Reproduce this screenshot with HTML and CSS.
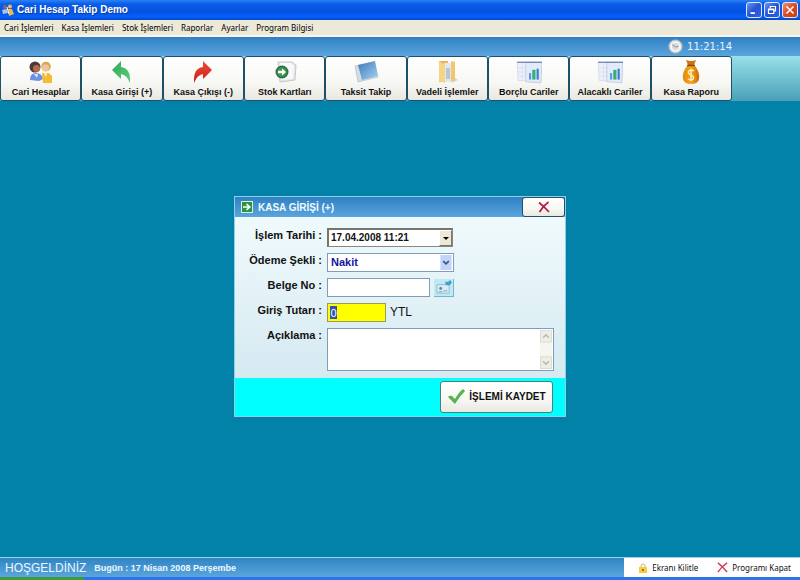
FILE: index.html
```
<!DOCTYPE html>
<html lang="tr">
<head>
<meta charset="utf-8">
<title>Cari Hesap Takip Demo</title>
<link rel="stylesheet" href="styles.css">
</head>
<body>
<svg class="defs" aria-hidden="true">
  <defs>
    <linearGradient id="green" x1="0" y1="0" x2="1" y2="1"><stop offset="0" stop-color="#2fa862"/><stop offset="1" stop-color="#5bd070"/></linearGradient>
    <linearGradient id="red" x1="0" y1="0" x2="0" y2="1"><stop offset="0" stop-color="#f04a3a"/><stop offset="1" stop-color="#c81f14"/></linearGradient>
    <linearGradient id="glass" x1="0" y1="0" x2="1" y2="1"><stop offset="0" stop-color="#3f78b4"/><stop offset="1" stop-color="#a4d4f4"/></linearGradient>
    <linearGradient id="gold" x1="0" y1="0" x2="1" y2="0"><stop offset="0" stop-color="#e08a10"/><stop offset=".5" stop-color="#f6a81c"/><stop offset="1" stop-color="#c96a08"/></linearGradient>
    <symbol id="chart" viewBox="0 0 24 22">
      <path d="M1 2h15v17H2z" fill="#edf0fa" stroke="#d3d7e4" stroke-width=".7"/>
      <path d="M2 7h9M2 11h9M2 15h9M6 3v15" stroke="#d4dcf0" stroke-width=".7"/>
      <path d="M9 2h15l-1 19-14-1z" fill="#e2ebfa" stroke="#b9c5de" stroke-width=".7"/>
      <path d="M1 2h23" stroke="#5a74b4"/>
      <path d="M12 12h2v6h-2z" fill="#5d9be0"/><path d="M15 9h3v9h-3z" fill="#35b07a"/><path d="M19 8h2v10h-2z" fill="#3f78d0"/>
    </symbol>
  </defs>
</svg>

<header class="titlebar">
  <svg class="app-icon" viewBox="0 0 12 12"><circle cx="3" cy="3" r="2" fill="#8b6a50"/><circle cx="8" cy="2.500" r="2" fill="#f2b97a"/><path d="M0 6l5-1 1 4-5 1z" fill="#a9c4f0"/><path d="M6 5h4l2 5-5 2z" fill="#f0b840"/><path d="M5 3l2 7" stroke="#fff"/></svg>
  <h1>Cari Hesap Takip Demo</h1>
  <div class="window-controls">
    <button type="button" aria-label="Simge durumuna küçült"><svg viewBox="0 0 16 16"><path d="M4 11.500h5" stroke="#fff" stroke-width="2"/></svg></button>
    <button type="button" aria-label="Önceki boyut"><svg viewBox="0 0 16 16"><path d="M6 6V4h6v5h-2M4 7h6v5H4zM4 7.500h6" fill="none" stroke="#fff" stroke-width="1.300"/></svg></button>
    <button type="button" class="exit" aria-label="Kapat"><svg viewBox="0 0 16 16"><path d="M4 4l8 8M12 4l-8 8" stroke="#fff" stroke-width="1.800"/></svg></button>
  </div>
</header>

<nav class="menu">
  <a href="#">Cari İşlemleri</a><a href="#">Kasa İşlemleri</a><a href="#">Stok İşlemleri</a><a href="#">Raporlar</a><a href="#">Ayarlar</a><a href="#">Program Bilgisi</a>
</nav>

<div class="clock-bar">
  <svg class="clock" viewBox="0 0 16 16"><circle cx="8" cy="8" r="7" fill="#e9eaec" stroke="#b7b9be" stroke-width="1.200"/><circle cx="8" cy="8" r="4.500" fill="#d9dadd" stroke="#fff"/><path d="M4.500 6L8 8.500 11 8" fill="none" stroke="#8f8f96"/></svg>
  <time>11:21:14</time>
</div>

<div class="toolbar">
  <div class="tools">
    <button type="button"><svg viewBox="0 0 26 24"><circle cx="7" cy="7" r="5.500" fill="#4a3a3c"/><circle cx="8.500" cy="8.500" r="3.500" fill="#b56c48"/><path d="M2 20q0-7 6-7t7 6l-4 2z" fill="#6d8fe4"/><path d="M6 14l3 4 1-4z" fill="#dfe8fb"/><circle cx="18" cy="6.500" r="4.800" fill="#d7a94c"/><circle cx="17.500" cy="7.800" r="3.600" fill="#f0c49a"/><path d="M14 13h7l3 3v7h-9z" fill="#f4bd30"/><path d="M16 13l2 4 1-4z" fill="#fff4d0"/></svg>Cari Hesaplar</button>
    <button type="button"><svg viewBox="0 0 26 24"><path d="M3 10L12 1v6q10 1 9 16-3-8-9-9v5z" fill="url(#green)"/></svg>Kasa Girişi (+)</button>
    <button type="button"><svg viewBox="0 0 26 24"><path d="M22 10L13 1v6Q3 8 4 23q3-8 9-9v5z" fill="url(#red)"/></svg>Kasa Çıkışı (-)</button>
    <button type="button"><svg viewBox="0 0 26 24"><path d="M6 2h14l4 3-1 15-15 2z" fill="#e4e6ea" stroke="#c6c8ce"/><path d="M8 3h11l3 3-1 13-12 1z" fill="#f8f8fa"/><circle cx="10" cy="12" r="6.500" fill="#2a7140"/><circle cx="10" cy="12" r="4.800" fill="#3f9656"/><path d="M6 10.800h4V8.500l4 3.500-4 3.500v-2.300H6z" fill="#fff"/></svg>Stok Kartları</button>
    <button type="button"><svg viewBox="0 0 26 24"><path d="M2 6L21 2l4 15L5 22z" fill="#d5dbe4" stroke="#b6bfcc" stroke-width=".7"/><path d="M5 5l17-4 3 15-16 4z" fill="url(#glass)"/></svg>Taksit Takip</button>
    <button type="button"><svg viewBox="0 0 26 24"><path d="M17 15l7 5-6 3z" fill="#d5d5d5"/><path d="M5 1h9v20l-9 1z" fill="#e8b850"/><path d="M10 3h9v19h-9z" fill="#e4e7ee"/><path d="M12 8h4v11h-4z" fill="#b9c4d8"/><path d="M17 1l4 1v18l-4 2z" fill="#f0c868"/><path d="M5 1l6 4v18l-6-2z" fill="#f5d482"/></svg>Vadeli İşlemler</button>
    <button type="button"><svg viewBox="0 0 24 22"><use href="#chart"/></svg>Borçlu Cariler</button>
    <button type="button"><svg viewBox="0 0 24 22"><use href="#chart"/></svg>Alacaklı Cariler</button>
    <button type="button"><svg viewBox="0 0 26 24"><path d="M8 0q5 2 10 0l-2 5h-6z" fill="#c87414"/><path d="M9 6h8q5 6 4 13-1 5-8 5t-8-5Q4 12 9 6z" fill="url(#gold)"/><path d="M9 5.500h8" stroke="#8e4a08" stroke-width="1.500"/><path d="M16 11q-3-2-5 0t2 4 2 4-5 0M13 9v12" fill="none" stroke="#fff3c8" stroke-width="1.300"/></svg>Kasa Raporu</button>
  </div>
</div>

<main class="workspace">
  <form class="dialog">
    <div class="dialog-head">
      <svg class="head-icon" viewBox="0 0 12 12"><path d="M0 0h12v12H0z" fill="#d9efdc"/><path d="M1 1h10v10H1z" fill="#2c9340"/><path d="M2 6h6M5.500 3L8.800 6 5.500 9" fill="none" stroke="#fff" stroke-width="1.600"/></svg>
      <h2>KASA GİRİŞİ (+)</h2>
      <button type="button" class="push dialog-close" aria-label="Kapat"><svg viewBox="0 0 12 12"><path d="M1 1.500q5 4 10 9.500M10.500 1Q5 5 1.500 11" fill="none" stroke="#b81e3e" stroke-width="1.700"/></svg></button>
    </div>
    <div class="fields">
      <label for="date">İşlem Tarihi :</label>
      <div class="date-box"><input id="date" type="text" value="17.04.2008 11:21"><button type="button" aria-label="Takvimi aç"></button></div>
      <label for="payment">Ödeme Şekli :</label>
      <div class="select-box"><select id="payment"><option>Nakit</option></select><svg viewBox="0 0 12 16"><path d="M0 0h12v16H0z" fill="#c3d3fa"/><path d="M3 6.500l3 3 3-3" fill="none" stroke="#3d5687" stroke-width="1.800"/></svg></div>
      <label for="doc">Belge No :</label>
      <div class="row"><input id="doc" class="doc" type="text"><button type="button" class="card-button" aria-label="Belge seç"><svg viewBox="0 0 20 18"><path d="M3 6h13v9H3z" fill="#d7ecf6" stroke="#8fbdd2"/><circle cx="7" cy="10" r="1.500" fill="#5f7f98"/><path d="M5 13.500h4M10 12.500h4" stroke="#72a4bf"/><path d="M12 3h3l2-2 2 3-3 3-4-1z" fill="#489cc8"/></svg></button></div>
      <label for="amount">Giriş Tutarı :</label>
      <div class="row"><div class="amount"><input id="amount" type="text" value="0"></div><span class="unit">YTL</span></div>
      <label for="note">Açıklama :</label>
      <div class="note-box"><textarea id="note"></textarea><svg viewBox="0 0 12 40" preserveAspectRatio="none"><path d="M0 0h12v40H0z" fill="#f5f5f1"/><path d="M.5.500h11v12H.5zM.5 27.500h11v12H.5z" fill="#eeeee6" stroke="#dddcd0"/><path d="M3 8l3-3 3 3M3 32l3 3 3-3" fill="none" stroke="#b9b9ad" stroke-width="1.500"/></svg></div>
    </div>
    <div class="dialog-foot">
      <button type="submit" class="push save"><svg viewBox="0 0 18 16"><path d="M1 8q2-2 4-1l3 3Q12 3 16 0l2 2Q12 8 8 15z" fill="#54b54c"/></svg>İŞLEMİ KAYDET</button>
    </div>
  </form>
</main>

<footer class="status">
  <span class="welcome">HOŞGELDİNİZ</span>
  <span class="today">Bugün : 17 Nisan 2008 Perşembe</span>
  <div class="status-actions">
    <button type="button"><svg viewBox="0 0 10 10"><path d="M3 5V3q0-2 2-2t2 2v2" fill="none" stroke="#c9b27a"/><path d="M1 4h8v6H1z" fill="#f4cf3c"/><path d="M4 6h2v2H4z" fill="#a07414"/></svg>Ekranı Kilitle</button>
    <button type="button"><svg class="quit" viewBox="0 0 12 12"><path d="M1 1q5 4 10 10M11 1Q5 5 1 11" fill="none" stroke="#d23f56" stroke-width="1.600"/></svg>Programı Kapat</button>
  </div>
</footer>
<div class="taskbar"><span></span></div>
</body>
</html>
```
FILE: styles.css
```
* { box-sizing: border-box; }
body {
  margin: 0;
  min-height: 100vh;
  display: flex;
  flex-direction: column;
  background: #0281a9;
  color: #111;
  font: 9px/12px "Liberation Sans", Arial, sans-serif;
}
button, input, select, textarea { font: inherit; color: inherit; margin: 0; padding: 0; border: 0; border-radius: 0; }
h1, h2 { margin: 0; }
svg { display: block; flex: none; }
.defs { position: absolute; width: 0; height: 0; }

.titlebar {
  display: flex;
  align-items: center;
  height: 20px;
  padding: 0 2px;
  background: linear-gradient(#2b82f4, #0a5ce8 20%, #0453e2 60%, #0561fb 85%, #0345c4);
}
.app-icon { width: 12px; height: 12px; }
.titlebar h1 {
  flex: 1;
  padding-left: 3px;
  color: #fff;
  font: bold 10px/14px "Liberation Sans", sans-serif;
  text-shadow: 1px 1px #0a3a9c;
}
.window-controls { display: flex; gap: 2px; }
.window-controls button {
  width: 16px;
  height: 16px;
  border: 1px solid #dce7fd;
  border-radius: 3px;
  background: linear-gradient(135deg, #6b94f0, #2454d4 50%, #2e62e0);
}
.window-controls svg { width: 14px; height: 14px; }
.window-controls .exit { background: linear-gradient(135deg, #f09076, #dc4a22 50%, #c83c14); }

.menu {
  display: flex;
  gap: 8px;
  height: 17px;
  padding: 0 4px;
  border-bottom: 2px solid #f8f6f0;
  background: #ece9d8;
  font: 8px/16px "Noto Sans", sans-serif;
}
.menu a { color: #000; text-decoration: none; white-space: nowrap; }

.clock-bar {
  display: flex;
  align-items: center;
  justify-content: flex-end;
  gap: 4px;
  height: 19px;
  padding-right: 68px;
  background: linear-gradient(#2f80c4, #5ba5dd);
  color: #e8f4ff;
  font: 10px/14px "DejaVu Sans", sans-serif;
}
.clock { width: 15px; height: 15px; }

.toolbar { background: linear-gradient(#98e0e8, #4aa0b8); }
.tools { display: grid; grid-template-columns: repeat(9, 1fr); width: 91.5%; }
.tools button, .push {
  border: 1px solid #1e5068;
  border-radius: 3px;
  background: linear-gradient(#fff, #f7f7f4 60%, #e9e8e0);
}
.tools button {
  display: flex;
  flex-direction: column;
  align-items: center;
  gap: 2px;
  height: 45px;
  padding-top: 3px;
  font-weight: bold;
  white-space: nowrap;
}
.tools svg { width: 26px; height: 24px; }

.workspace { flex: 1; padding: 95px 0 16px; }
.dialog {
  width: 332px;
  margin: 0 auto;
  border: 1px solid #8fd0e6;
  background: linear-gradient(#f3fcfd, #d4e9f1 85%);
}
.dialog-head {
  display: flex;
  align-items: center;
  height: 20px;
  padding-left: 6px;
  background: linear-gradient(#2f80c4, #5ba5dd);
}
.head-icon { width: 12px; height: 12px; }
.dialog-head h2 { flex: 1; padding: 2px 0 0 5px; color: #f0f8ff; font: bold 10px/12px "Liberation Sans", sans-serif; }
.push { display: flex; align-items: center; justify-content: center; }
.dialog-close { width: 43px; height: 20px; }
.dialog-close svg { width: 12px; height: 12px; }

.fields {
  display: grid;
  grid-template-columns: 87px 1fr;
  column-gap: 5px;
  row-gap: 6px;
  padding: 11px 11px 7px 0;
}
.fields label { padding-top: 1px; text-align: right; font: bold 11px/13px "Liberation Sans", sans-serif; white-space: nowrap; }
.fields input, .fields select, .fields textarea { display: block; outline: none; }
.date-box {
  display: flex;
  width: 126px;
  height: 19px;
  border: 1px solid #8a8880;
  border-top: 2px solid #77756c;
  border-left: 2px solid #77756c;
  background: #fff;
}
.date-box input { flex: 1; min-width: 0; padding-left: 2px; background: none; font-size: 10px; font-weight: bold; }
.date-box button {
  display: grid;
  place-items: center;
  width: 13px;
  border: 1px solid #fff;
  border-right-color: #77756c;
  border-bottom-color: #77756c;
  background: #ece9d8;
}
.date-box button::before { content: ""; border: 3px solid transparent; border-top-color: #000; border-bottom: 0; }
.select-box { display: flex; width: 127px; height: 19px; padding: 1px; border: 1px solid #7f9db9; background: #fff; }
.select-box select { flex: 1; appearance: none; padding-left: 2px; background: none; color: #1414a0; font: bold 11px/15px "Liberation Sans", sans-serif; }
.select-box svg { width: 12px; height: 15px; }
.row { display: flex; align-items: center; gap: 4px; height: 19px; }
.doc { width: 103px; height: 19px; background: #fff; border: 1px solid #7f9db9; }
.card-button { width: 20px; height: 18px; background: #bfe9f3; border-right: 1px solid #77b6c8; border-bottom: 1px solid #77b6c8; }
.card-button svg { width: 19px; height: 17px; }
.amount { display: flex; width: 59px; height: 19px; padding: 2px; border: 1px solid #9c9c50; background: #ff0; }
.amount input { width: 7px; height: 13px; background: #2f55b4; color: #fff; font-size: 11px; text-align: center; }
.unit { font: 12px/13px "Liberation Sans", sans-serif; }
.note-box { display: flex; height: 43px; padding: 1px; border: 1px solid #7f9db9; background: #fff; }
.note-box textarea { flex: 1; resize: none; background: #fff; overflow: hidden; }
.note-box svg { width: 12px; height: 39px; }
.dialog-foot { display: flex; justify-content: flex-end; padding: 3px 12px; background: #0ff; }
.save { gap: 4px; width: 113px; height: 32px; border-color: #48807c; font-size: 10px; font-weight: bold; white-space: nowrap; }
.save svg { width: 18px; height: 16px; }

.status {
  display: flex;
  align-items: center;
  height: 20px;
  padding-left: 5px;
  border-top: 1px solid #a4d0e8;
  background: linear-gradient(#2f85c4, #5ba5dd);
  color: #f0f8ff;
}
.welcome { font: 12px/14px "Liberation Sans", sans-serif; }
.today { flex: 1; padding-left: 8px; font-weight: bold; }
.status-actions { display: flex; align-self: stretch; align-items: center; gap: 19px; padding: 0 9px 0 14px; background: #fff; color: #111; }
.status-actions button { display: flex; align-items: center; gap: 4px; background: none; font: 8px/12px "Noto Sans", sans-serif; white-space: nowrap; }
.status-actions svg { width: 10px; height: 10px; }
.status-actions .quit { width: 11px; height: 11px; }
.taskbar { height: 3px; background: #2c74e8; }
.taskbar span { display: block; width: 84px; height: 3px; background: #3c9c3c; }
```
